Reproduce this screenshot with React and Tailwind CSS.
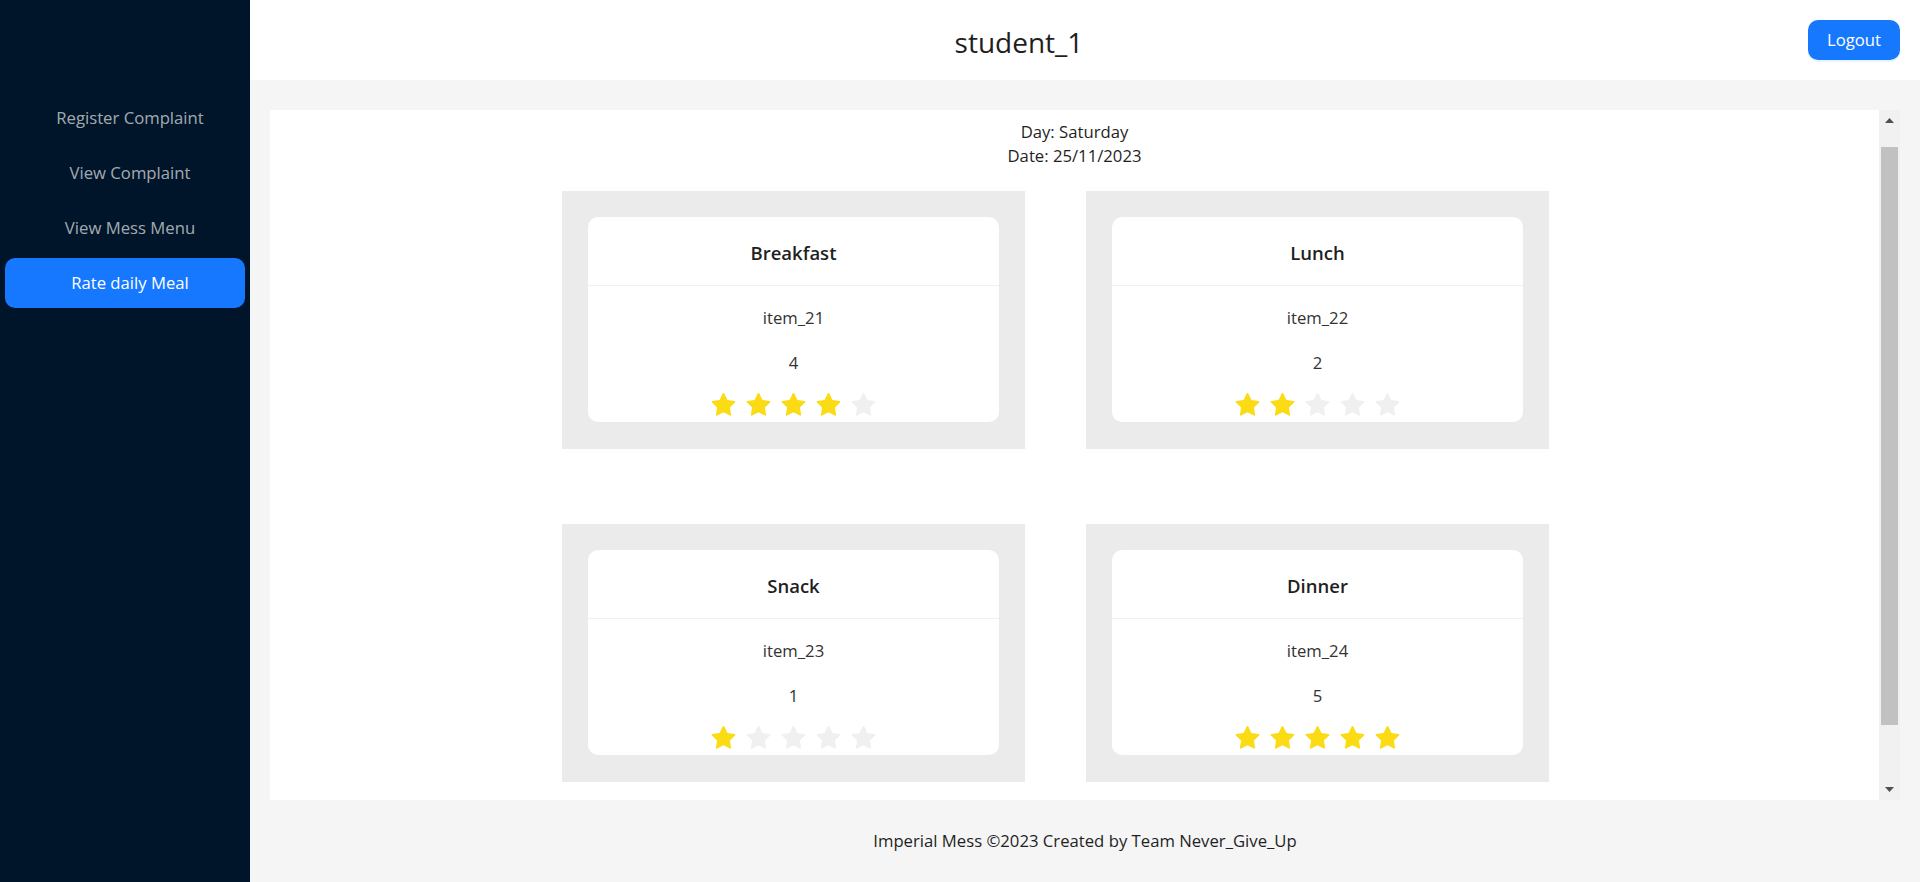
import React from 'react';

const FONT = { fontFamily: '"Open Sans", "Noto Sans", sans-serif' };

const MENU_ITEMS = [
	{ label: 'Register Complaint', active: false },
	{ label: 'View Complaint', active: false },
	{ label: 'View Mess Menu', active: false },
	{ label: 'Rate daily Meal', active: true },
];

const MEALS = [
	{ title: 'Breakfast', item: 'item_21', rating: 4 },
	{ title: 'Lunch', item: 'item_22', rating: 2 },
	{ title: 'Snack', item: 'item_23', rating: 1 },
	{ title: 'Dinner', item: 'item_24', rating: 5 },
];

// star glyph (same shape as antd StarFilled)
function Star({ filled }) {
	return (
		<svg viewBox="64 64 896 896" className="w-[25px] h-[25px]" fill={filled ? '#fadb14' : '#f0f0f0'}>
			<path d="M908.1 353.1l-253.9-36.9L540.7 86.1c-3.1-6.3-8.2-11.4-14.5-14.5-15.8-7.8-35-1.3-42.9 14.5L369.8 316.2l-253.9 36.9c-7 1-13.4 4.3-18.3 9.3a32.05 32.05 0 00.6 45.3l183.7 179.1-43.4 252.9a31.95 31.95 0 0046.4 33.7L512 754l227.1 119.4c6.2 3.3 13.4 4.4 20.3 3.2 17.4-3 29.1-19.5 26.1-36.9l-43.4-252.9 183.7-179.1c5-4.9 8.3-11.3 9.3-18.3 2.7-17.5-9.5-33.7-27-36.3z" />
		</svg>
	);
}

function MealCard({ title, item, rating }) {
	return (
		<div className="bg-[#ebebeb] p-[26px] h-[258px]">
			<div className="bg-white rounded-[10px] h-[205px] overflow-hidden">
				<div className="h-[69px] pt-[3px] border-b border-[#f0f0f0] flex items-center justify-center text-[18.5px] font-semibold text-[#1f1f1f]">
					{title}
				</div>
				<div className="flex flex-col items-center text-[16.7px] leading-[27.5px] text-[#333] pt-[17.5px]">
					<p>{item}</p>
					<p className="mt-[17.5px]">{rating}</p>
					<div className="flex gap-[10px] mt-[17px]">
						{[1, 2, 3, 4, 5].map((n) => (
							<Star key={n} filled={n <= rating} />
						))}
					</div>
				</div>
			</div>
		</div>
	);
}

function Sidebar() {
	return (
		<div className="w-[250px] shrink-0 bg-[#001529] pt-[93px] flex flex-col gap-[5px]">
			{MENU_ITEMS.map((m) => (
				<div
					key={m.label}
					className={`mx-[5px] h-[50px] rounded-[10px] pl-[30px] pr-[20px] flex items-center justify-center text-[16.7px] ${m.active ? 'bg-[#1677ff] text-white' : 'text-[#ffffffa6]'}`}
				>
					{m.label}
				</div>
			))}
		</div>
	);
}

function Scrollbar() {
	return (
		<div className="w-[21px] shrink-0 bg-[#f1f1f1] flex flex-col items-center">
			<div className="h-[21px] w-full flex items-center justify-center">
				<svg width="9" height="5" viewBox="0 0 9 5"><path d="M0 5 L4.5 0 L9 5 Z" fill="#505050" /></svg>
			</div>
			<div className="flex-1 w-full px-[2px] pt-[16px]">
				<div className="h-[578px] bg-[#c1c1c1]"></div>
			</div>
			<div className="h-[21px] w-full flex items-center justify-center">
				<svg width="9" height="5" viewBox="0 0 9 5"><path d="M0 0 L9 0 L4.5 5 Z" fill="#505050" /></svg>
			</div>
		</div>
	);
}

export default function App() {
	return (
		<div className="w-[1920px] h-[882px] flex overflow-hidden text-[#1f1f1f]" style={FONT}>
			<Sidebar />

			<div className="flex-1 flex flex-col bg-[#f5f5f5]">
				{/* Header */}
				<div className="h-[80px] bg-white flex items-center pr-[20px]">
					<div className="flex-1 text-center text-[28px] text-[#1f1f1f] mt-[3px]">student_1</div>
					<button className="ml-[20px] h-[40px] px-[19px] rounded-[10px] bg-[#1677ff] text-white text-[16.7px] shadow-[0_2px_0_rgba(5,145,255,0.1)]">
						Logout
					</button>
				</div>

				{/* Content */}
				<div className="mt-[30px] mx-[20px] h-[690px] bg-white flex">
					<div className="flex-1 overflow-hidden">
						<div className="pt-[10px] text-center text-[16.7px] leading-[24px] text-[#1f1f1f]">
							<div>Day: Saturday</div>
							<div>Date: 25/11/2023</div>
						</div>
						<div className="mt-[23px] pl-[292px] grid grid-cols-[463px_463px] gap-x-[61px] gap-y-[75px]">
							{MEALS.map((m) => (
								<MealCard key={m.title} {...m} />
							))}
						</div>
					</div>
					<Scrollbar />
				</div>

				{/* Footer */}
				<div className="flex-1 flex items-center justify-center text-[16.7px] text-[#1f1f1f]">
					Imperial Mess ©2023 Created by Team Never_Give_Up
				</div>
			</div>
		</div>
	);
}
